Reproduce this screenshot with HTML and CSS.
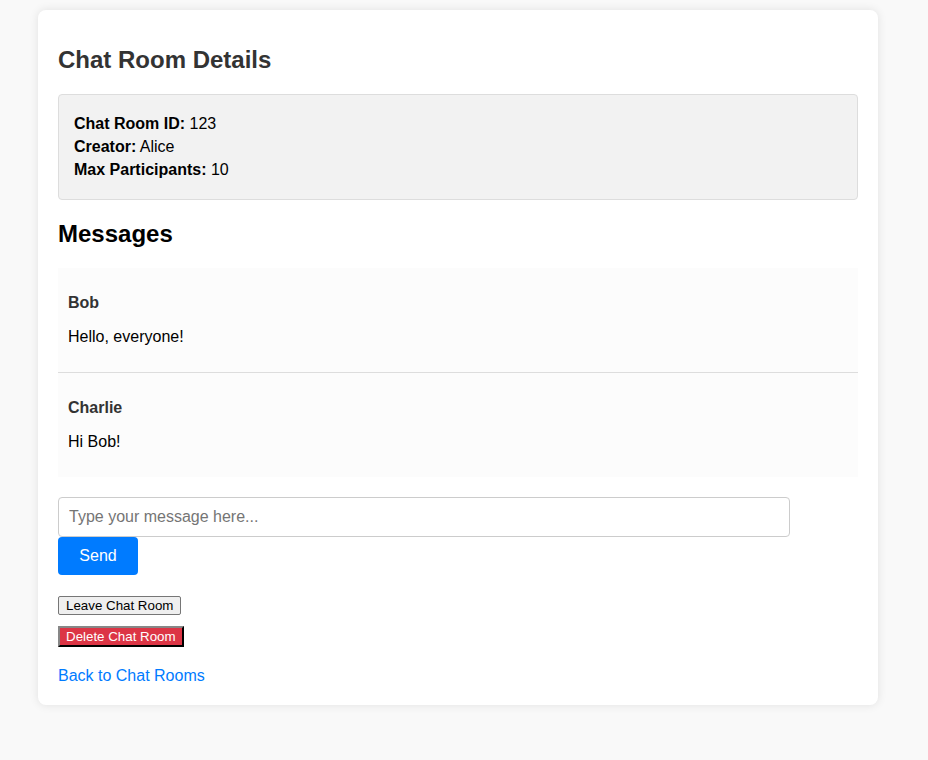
FILE: index.html
```html
<!DOCTYPE html>
<html>
<head>
<meta charset="utf-8">
<title>Chat Room Details</title>
<link rel="stylesheet" href="styles.css">
</head>
<body>
<div class="container">
  <h2 class="title">Chat Room Details</h2>
  <div class="details">
    <p><strong>Chat Room ID:</strong> 123</p>
    <p><strong>Creator:</strong> Alice</p>
    <p><strong>Max Participants:</strong> 10</p>
  </div>
  <h2 class="section">Messages</h2>
  <div class="messages">
    <div class="message">
      <p class="author">Bob</p>
      <p class="text">Hello, everyone!</p>
    </div>
    <div class="message">
      <p class="author">Charlie</p>
      <p class="text">Hi Bob!</p>
    </div>
  </div>
  <form class="compose">
    <input class="compose-input" type="text" placeholder="Type your message here...">
    <button class="send" type="button">Send</button>
  </form>
  <div class="actions">
    <div class="action-row"><button class="btn-leave" type="button">Leave Chat Room</button></div>
    <div class="action-row"><button class="btn-delete" type="button">Delete Chat Room</button></div>
  </div>
  <a class="back" href="#">Back to Chat Rooms</a>
</div>
</body>
</html>
```
FILE: styles.css
```css
html, body {
  margin: 0;
  padding: 0;
}
body {
  background: #f9f9f9;
  font-family: "Liberation Sans", Arial, sans-serif;
  font-size: 16px;
  padding-top: 10px;
  padding-bottom: 55px;
}
.container {
  width: 800px;
  margin-left: 38px;
  padding: 20px;
  background: #fff;
  border-radius: 8px;
  box-shadow: 0 0 10px rgba(0, 0, 0, 0.1);
}
.title {
  font-size: 24px;
  color: #333;
  margin: 16px 0 20px;
}
.details {
  background: #f2f2f2;
  border: 1px solid #ddd;
  border-radius: 4px;
  padding: 15px;
}
.details p {
  margin: 5px 0;
}
.section {
  font-size: 24px;
  color: #000;
  margin: 20px 0;
}
.messages {
  background: #fcfcfc;
}
.message {
  padding: 10px;
  border-bottom: 1px solid #ddd;
}
.message:last-child {
  border-bottom: none;
}
.message p {
  margin: 16px 0;
}
.author {
  font-weight: bold;
  color: #333;
}
.text {
  color: #000;
}
.compose {
  margin-top: 20px;
  display: flex;
  flex-direction: column;
  align-items: flex-start;
}
.compose-input {
  box-sizing: border-box;
  width: 732px;
  height: 40px;
  padding: 10px;
  border: 1px solid #ccc;
  border-radius: 4px;
  font-family: "Liberation Sans", Arial, sans-serif;
  font-size: 16px;
  color: #333;
}
.compose-input::placeholder {
  color: #757575;
}
.send {
  width: 80px;
  height: 38px;
  border: none;
  border-radius: 4px;
  background: #007bff;
  color: #fff;
  font-family: "Liberation Sans", Arial, sans-serif;
  font-size: 16px;
}
.actions {
  margin-top: 21px;
}
.action-row {
  margin-bottom: 11px;
  line-height: 0;
}
.btn-leave, .btn-delete {
  font-family: "Liberation Sans", Arial, sans-serif;
  font-size: 13.33px;
  line-height: normal;
  padding: 1px 6px;
  margin: 0;
}
.btn-leave {
  padding: 1px 7px;
  border: 1px solid #767676;
  border-radius: 2px;
  background: #efefef;
  color: #000;
}
.btn-delete {
  background: #dc3545;
  color: #fff;
  border: 2px outset #333;
}
.back {
  display: inline-block;
  margin-top: 9px;
  color: #007bff;
  text-decoration: none;
}
```
